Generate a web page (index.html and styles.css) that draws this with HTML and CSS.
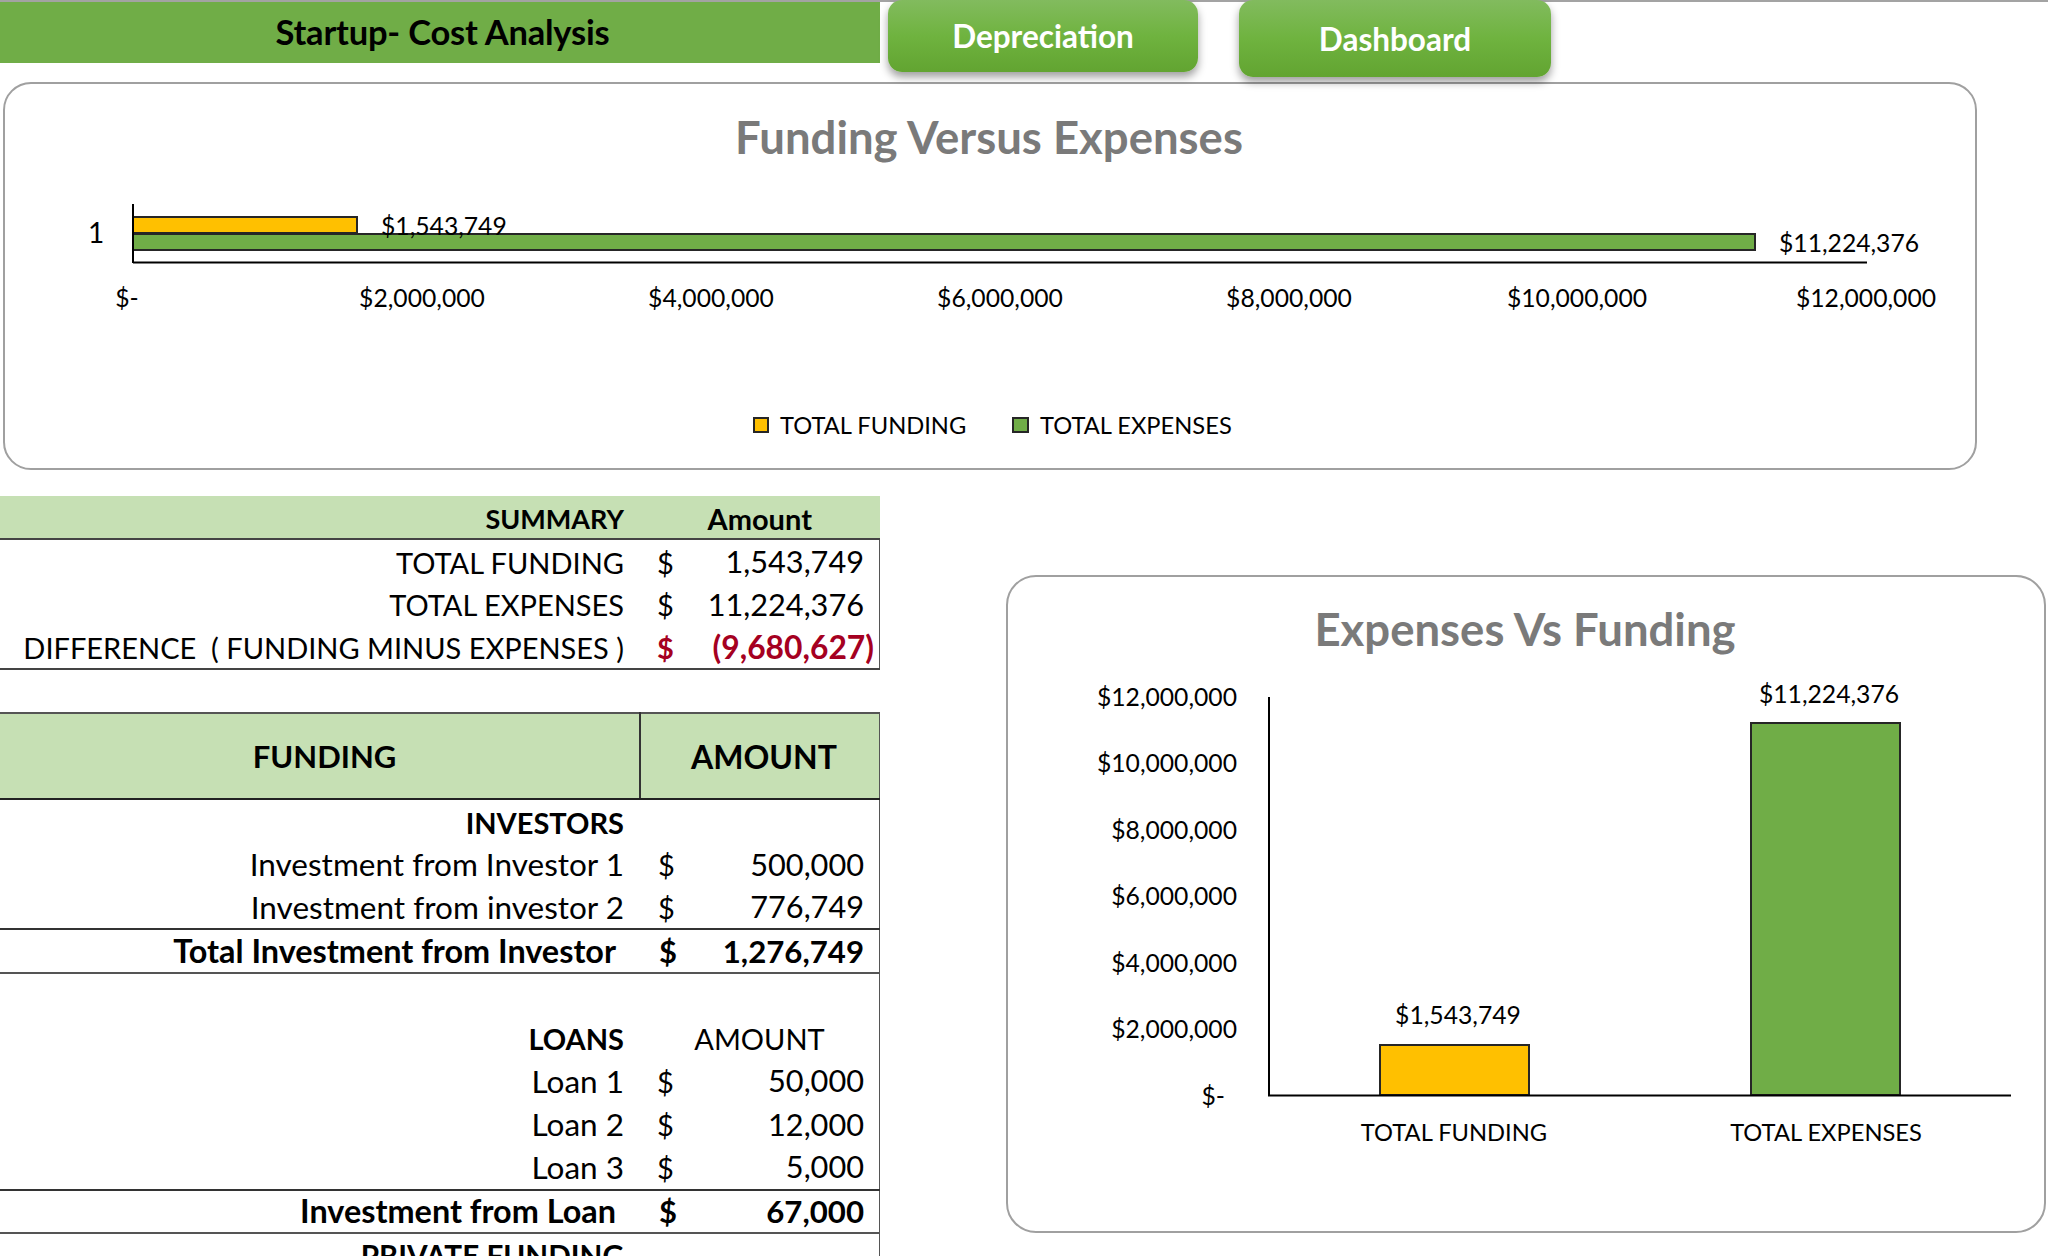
FILE: index.html
```html
<!DOCTYPE html>
<html lang="en">
<head>
    <meta charset="UTF-8">
    <title>Startup- Cost Analysis</title>
    <link rel="stylesheet" href="styles.css">
</head>
<body>
    <div class="page">
        <div class="topbar">
            <div class="sheet-title">Startup- Cost Analysis</div>
            <div class="nav-button first">Depreciation</div>
            <div class="nav-button second">Dashboard</div>
        </div>

        <div class="card card-wide">
            <svg class="chart" width="1970" height="384" viewBox="5 84 1970 384">
                <text class="chart-title" x="989" y="154">Funding Versus Expenses</text>
                <text class="tick middle one" x="96" y="243">1</text>
                <rect class="bar yellow" x="133" y="217" width="224" height="16"></rect>
                <rect class="bar green" x="133" y="234" width="1622" height="16"></rect>
                <line class="axis" x1="133" y1="204" x2="133" y2="263"></line>
                <line class="axis" x1="133" y1="262.5" x2="1867" y2="262.5"></line>
                <text class="tick" x="381" y="235">$1,543,749</text>
                <text class="tick" x="1779" y="252">$11,224,376</text>
                <text class="tick middle" x="127" y="307">$-</text>
                <text class="tick middle" x="422" y="307">$2,000,000</text>
                <text class="tick middle" x="711" y="307">$4,000,000</text>
                <text class="tick middle" x="1000" y="307">$6,000,000</text>
                <text class="tick middle" x="1289" y="307">$8,000,000</text>
                <text class="tick middle" x="1577" y="307">$10,000,000</text>
                <text class="tick middle" x="1866" y="307">$12,000,000</text>
                <rect class="bar yellow" x="754" y="418" width="14" height="14"></rect>
                <text class="tick caps" x="780" y="434">TOTAL FUNDING</text>
                <rect class="bar green" x="1013" y="418" width="15" height="14"></rect>
                <text class="tick caps" x="1040" y="434">TOTAL EXPENSES</text>
            </svg>
        </div>

        <div class="lower">
            <table class="sheet">
                <colgroup>
                    <col class="col-label">
                    <col class="col-sign">
                    <col class="col-value">
                </colgroup>
                <tr class="head-row">
                    <td class="label bold">SUMMARY</td>
                    <td class="center bold amount-small" colspan="2">Amount</td>
                </tr>
                <tr>
                    <td class="label">TOTAL FUNDING</td>
                    <td class="sign">$</td>
                    <td class="value">1,543,749</td>
                </tr>
                <tr>
                    <td class="label">TOTAL EXPENSES</td>
                    <td class="sign">$</td>
                    <td class="value">11,224,376</td>
                </tr>
                <tr class="rule-bottom">
                    <td class="label">DIFFERENCE&nbsp; ( FUNDING MINUS EXPENSES )</td>
                    <td class="sign negative">$</td>
                    <td class="value negative">(9,680,627)</td>
                </tr>
                <tr class="blank"><td colspan="3"></td></tr>
                <tr class="big-head">
                    <td class="center funding-head">FUNDING</td>
                    <td class="center amount-head" colspan="2">AMOUNT</td>
                </tr>
                <tr>
                    <td class="label bold">INVESTORS</td>
                    <td class="sign"></td>
                    <td class="value"></td>
                </tr>
                <tr>
                    <td class="label mixed">Investment from Investor 1</td>
                    <td class="sign wide">$</td>
                    <td class="value">500,000</td>
                </tr>
                <tr>
                    <td class="label mixed">Investment from investor 2</td>
                    <td class="sign wide">$</td>
                    <td class="value">776,749</td>
                </tr>
                <tr class="total-row">
                    <td class="label">Total Investment from Investor</td>
                    <td class="sign">$</td>
                    <td class="value">1,276,749</td>
                </tr>
                <tr>
                    <td class="label"></td>
                    <td class="sign"></td>
                    <td class="value"></td>
                </tr>
                <tr>
                    <td class="label bold">LOANS</td>
                    <td class="center" colspan="2">AMOUNT</td>
                </tr>
                <tr>
                    <td class="label mixed">Loan 1</td>
                    <td class="sign">$</td>
                    <td class="value">50,000</td>
                </tr>
                <tr>
                    <td class="label mixed">Loan 2</td>
                    <td class="sign">$</td>
                    <td class="value">12,000</td>
                </tr>
                <tr>
                    <td class="label mixed">Loan 3</td>
                    <td class="sign">$</td>
                    <td class="value">5,000</td>
                </tr>
                <tr class="total-row">
                    <td class="label">Investment from Loan</td>
                    <td class="sign">$</td>
                    <td class="value">67,000</td>
                </tr>
                <tr>
                    <td class="label bold private">PRIVATE FUNDING</td>
                    <td class="sign"></td>
                    <td class="value"></td>
                </tr>
            </table>

            <div class="card card-side">
                <svg class="chart" width="1036" height="654" viewBox="1008 577 1036 654">
                    <text class="chart-title" x="1525" y="646">Expenses Vs Funding</text>
                    <text class="tick end" x="1237" y="705.5">$12,000,000</text>
                    <text class="tick end" x="1237" y="772">$10,000,000</text>
                    <text class="tick end" x="1237" y="839">$8,000,000</text>
                    <text class="tick end" x="1237" y="905">$6,000,000</text>
                    <text class="tick end" x="1237" y="971.5">$4,000,000</text>
                    <text class="tick end" x="1237" y="1038">$2,000,000</text>
                    <text class="tick end" x="1225" y="1105">$-</text>
                    <rect class="bar yellow" x="1380" y="1045" width="149" height="50"></rect>
                    <rect class="bar green" x="1751" y="723" width="149" height="372"></rect>
                    <line class="axis" x1="1269" y1="697" x2="1269" y2="1096"></line>
                    <line class="axis" x1="1268" y1="1095.5" x2="2011" y2="1095.5"></line>
                    <text class="tick middle" x="1458" y="1024">$1,543,749</text>
                    <text class="tick middle" x="1829" y="702.5">$11,224,376</text>
                    <text class="tick middle caps" x="1454" y="1141">TOTAL FUNDING</text>
                    <text class="tick middle caps" x="1826" y="1141">TOTAL EXPENSES</text>
                </svg>
            </div>
        </div>
    </div>
</body>
</html>
```

FILE: styles.css
```css
html, body {
    margin: 0;
    height: 1256px;
    overflow: hidden;
    background-color: #fff;
}
.page {
    height: 1254px;
    border-top: 2px solid #a3a3a3;
    font-family: Lato, "Liberation Sans", sans-serif;
    color: #000;
}
.topbar {
    display: flex;
    align-items: flex-start;
    height: 80px;
}
.sheet-title {
    width: 880px;
    height: 61px;
    line-height: 59px;
    box-sizing: border-box;
    padding-left: 5px;
    background-color: #70ad47;
    text-align: center;
    font-size: 34.5px;
    font-weight: 700;
    letter-spacing: -0.2px;
}
.nav-button {
    position: relative;
    z-index: 2;
    display: flex;
    justify-content: center;
    align-items: center;
    box-sizing: border-box;
    margin-top: -2px;
    border-radius: 14px;
    background: linear-gradient(#82bb5e, #6fb33f 50%, #62a431);
    box-shadow: 0 5px 8px rgba(0, 0, 0, 0.38);
    color: #fff;
    font-size: 31.5px;
    font-weight: 700;
}
.nav-button.first {
    width: 310px;
    height: 72px;
    margin-left: 8px;
}
.nav-button.second {
    width: 312px;
    height: 77px;
    margin-left: 41px;
}
.card {
    box-sizing: border-box;
    border: 2px solid #a0a0a0;
    background-color: #fff;
}
.card-wide {
    width: 1974px;
    height: 388px;
    margin-left: 3px;
    border-radius: 28px;
}
.chart {
    display: block;
}
.chart-title {
    font-size: 45.5px;
    font-weight: 700;
    fill: #7a7a7a;
    text-anchor: middle;
}
.tick {
    font-size: 24.7px;
    fill: #000;
}
.tick.caps {
    font-size: 23.7px;
}
.tick.one {
    font-size: 28px;
}
.middle {
    text-anchor: middle;
}
.end {
    text-anchor: end;
}
.bar {
    stroke: #262626;
    stroke-width: 2;
}
.yellow {
    fill: #ffc000;
}
.green {
    fill: #70ad47;
}
.axis {
    stroke: #000;
    stroke-width: 2;
}
.lower {
    display: flex;
    align-items: flex-start;
    margin-top: 26px;
}
.sheet {
    flex: none;
    width: 880px;
    table-layout: fixed;
    border-collapse: collapse;
    font-size: 29px;
}
.col-label {
    width: 640px;
}
.col-sign {
    width: 50px;
}
.sheet td {
    height: 43.35px;
    padding: 1px 0 0;
    white-space: nowrap;
    box-sizing: border-box;
    line-height: 1;
}
.sheet td:last-child {
    border-right: 1px solid #555;
}
.label {
    padding-right: 16px !important;
    text-align: right;
}
.label.mixed {
    font-size: 31.5px;
}
.label.private {
    font-size: 29.7px;
}
.sign {
    padding-left: 17px !important;
}
.sign.wide {
    padding-left: 18px !important;
}
.value {
    padding-right: 15px !important;
    text-align: right;
    font-size: 30.7px;
}
.center {
    text-align: center;
}
.bold {
    font-weight: 700;
}
.negative {
    color: #a50021;
    font-weight: 700;
}
.head-row td {
    padding-top: 3px;
    background-color: #c6e0b4;
    border-bottom: 2px solid #444;
    font-size: 27px;
}
.head-row .amount-small {
    font-size: 29px;
}
.sheet .head-row td:last-child {
    border-right: none;
}
.rule-bottom td {
    border-bottom: 2px solid #444;
}
.value.negative {
    padding-right: 5px !important;
    font-size: 31.8px;
}
.sheet .blank td {
    border-right: none;
}
.big-head td {
    height: 86.7px;
    background-color: #c6e0b4;
    border-top: 2px solid #555;
    border-bottom: 2px solid #222;
    font-weight: 700;
}
.big-head .funding-head {
    padding-left: 10px;
    font-size: 31px;
}
.big-head .amount-head {
    padding-left: 8px;
    font-size: 32px;
}
.big-head td:first-child {
    border-right: 2px solid #333;
}
.total-row td {
    border-top: 2px solid #333;
    border-bottom: 2px solid #555;
    font-weight: 700;
}
.total-row .label {
    padding-right: 24px !important;
    font-size: 32.4px;
}
.total-row .sign {
    padding-left: 19px !important;
    font-size: 31px;
}
.total-row .value {
    font-size: 31.2px;
}
.card-side {
    flex: none;
    width: 1040px;
    height: 658px;
    margin-left: 126px;
    margin-top: 79px;
    border-radius: 30px;
}
```
